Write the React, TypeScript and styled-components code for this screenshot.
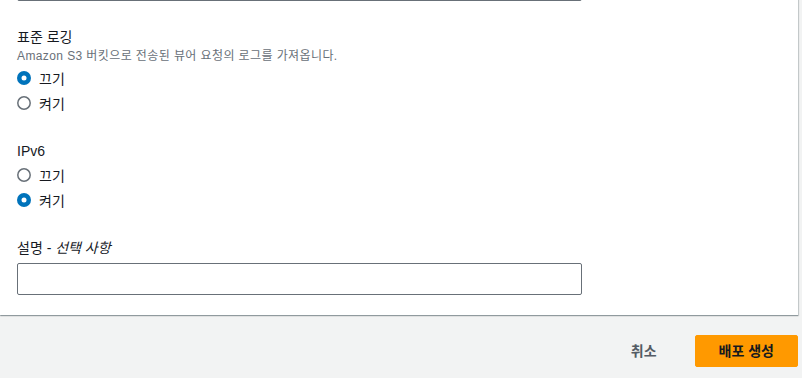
import React from 'react';
import styled, { createGlobalStyle } from 'styled-components';

const GlobalStyle = createGlobalStyle`
  html, body {
    margin: 0;
    padding: 0;
    background: #f2f3f3;
    overflow: hidden;
  }
  body {
    font-family: "Liberation Sans", "Noto Sans CJK KR", sans-serif;
    color: #16191f;
  }
`;

const Page = styled.div`
  /* scrolled: the previous field's input is mostly above the fold */
  margin-top: -31px;
  padding-right: 4px;
`;

const Card = styled.div`
  background: #fff;
  padding: 0 20px 20px 17px;
  box-shadow: 0 1px 1px 0 rgba(0, 28, 36, 0.3), 1px 1px 1px 0 rgba(0, 28, 36, 0.15);
  display: flex;
  flex-direction: column;
  gap: 25px;
`;

const Field = styled.div`
  display: flex;
  flex-direction: column;
`;

const Label = styled.div`
  font-size: 14px;
  line-height: 22px;
  color: #16191f;
`;

const Optional = styled.span`
  font-style: italic;
`;

const Description = styled.div`
  font-size: 12px;
  line-height: 16px;
  color: #687078;
  letter-spacing: 0.4px;
  margin-bottom: 1px;
`;

const TextInput = styled.input<{ $gap?: number }>`
  box-sizing: border-box;
  width: 565px;
  height: 32px;
  margin: ${(p) => (p.$gap ? `${p.$gap}px 0 0` : 0)};
  border: 1px solid #687078;
  border-radius: 2px;
  background: #fff;
  font: inherit;
  font-size: 14px;
  padding: 4px 10px;
  outline: none;
`;

const RadioGroup = styled.div`
  display: flex;
  flex-direction: column;
`;

const RadioRow = styled.label`
  display: flex;
  align-items: center;
  gap: 8px;
  height: 25px;
  font-size: 14px;
  color: #16191f;
`;

const RadioMark = ({ checked }: { checked: boolean }) => (
  <svg width="14" height="14" viewBox="0 0 14 14">
    {checked ? (
      <>
        <circle cx="7" cy="7" r="7" fill="#0073bb" />
        <circle cx="7" cy="7" r="2.5" fill="#fff" />
      </>
    ) : (
      <circle cx="7" cy="7" r="6.2" fill="#fff" stroke="#687078" strokeWidth="1.5" />
    )}
  </svg>
);

const Footer = styled.div`
  display: flex;
  justify-content: flex-end;
  align-items: center;
  gap: 17px;
  margin-top: 20px;
`;

const Button = styled.button<{ $primary?: boolean }>`
  font-family: inherit;
  font-size: 14px;
  font-weight: 700;
  line-height: 22px;
  padding: ${(p) => (p.$primary ? '4px 23px 4px' : '4px 20px')};
  border-radius: 2px;
  cursor: pointer;
  border: 1px solid ${(p) => (p.$primary ? '#ff9900' : 'transparent')};
  background: ${(p) => (p.$primary ? '#ff9900' : 'transparent')};
  color: ${(p) => (p.$primary ? '#16191f' : '#545b64')};
`;

const RadioField = ({ value }: { value: 'off' | 'on' }) => (
  <RadioGroup>
    <RadioRow>
      <RadioMark checked={value === 'off'} />
      끄기
    </RadioRow>
    <RadioRow>
      <RadioMark checked={value === 'on'} />
      켜기
    </RadioRow>
  </RadioGroup>
);

export default function App() {
  return (
    <>
      <GlobalStyle />
      <Page>
        <Card>
          <TextInput />
          <Field>
            <Label>표준 로깅</Label>
            <Description>Amazon S3 버킷으로 전송된 뷰어 요청의 로그를 가져옵니다.</Description>
            <RadioField value="off" />
          </Field>
          <Field>
            <Label>IPv6</Label>
            <RadioField value="on" />
          </Field>
          <Field>
            <Label>
              설명 - <Optional>선택 사항</Optional>
            </Label>
            <TextInput $gap={4} />
          </Field>
        </Card>
        <Footer>
          <Button>취소</Button>
          <Button $primary>배포 생성</Button>
        </Footer>
      </Page>
    </>
  );
}
